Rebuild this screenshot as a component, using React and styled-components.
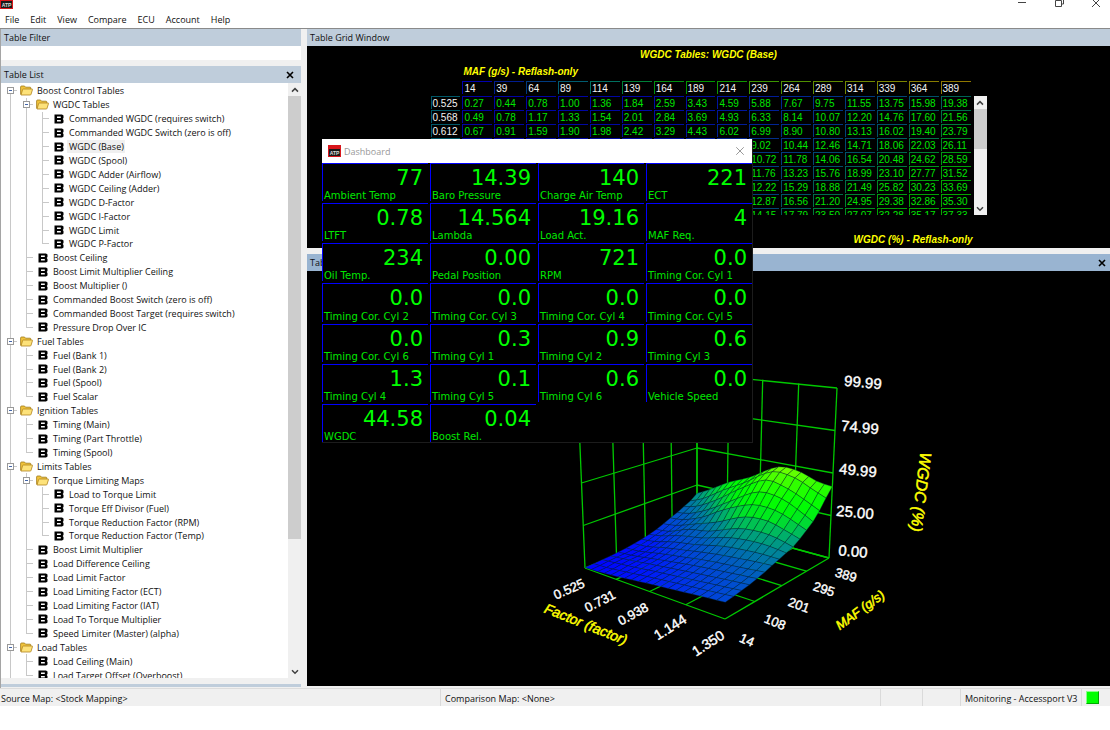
import React from 'react'
import styled, { createGlobalStyle } from 'styled-components'

const GlobalStyle = createGlobalStyle`
  * {
    box-sizing: border-box;
  }
  body {
    margin: 0;
    background: #fff;
    color: #111;
    font-family: 'Open Sans', 'Noto Sans', sans-serif;
    font-size: 9px;
  }
  button, input {
    font: inherit;
    color: inherit;
    border: 0;
    padding: 0;
    margin: 0;
    background: none;
  }
`

const Window = styled.div`
  position: relative;
  display: flex;
  flex-direction: column;
`
const TitleBar = styled.header`
  display: flex;
  justify-content: space-between;
  align-items: flex-start;
  height: 12px;
`
const WindowButtons = styled.div`
  display: flex;
  gap: 27px;
  padding-right: 9px;
  button {
    display: flex;
    width: 10px;
    height: 10px;
  }
`
const Menu = styled.nav`
  display: flex;
  align-items: center;
  gap: 11px;
  height: 17px;
  padding: 0 5px;
  border-bottom: 1px solid #8a8a8a;
  button {
    line-height: 14px;
  }
`
const Body = styled.div`
  display: flex;
  gap: 6px;
  height: 659px;
  background: #f0f0f0;
`
const Side = styled.aside`
  display: flex;
  flex-direction: column;
  width: 301px;
  border-left: 1px solid #a5a5a5;
`
const PaneTitle = styled.div`
  display: flex;
  flex-shrink: 0;
  align-items: center;
  justify-content: space-between;
  height: 17px;
  padding: 0 5px 0 3px;
  background: ${p => p.$active ? '#99b4d1' : '#bfcddb'};
  button {
    display: flex;
    width: 8px;
    height: 8px;
    margin-right: ${p => p.$active ? '-1px' : '2px'};
  }
`
const FilterInput = styled.input`
  flex-shrink: 0;
  width: 100%;
  height: 14px;
  margin-bottom: 6px;
  background: #fff;
  outline: none;
`
const TreeBox = styled.div`
  display: flex;
  flex: 1;
  min-height: 0;
  background: #fff;
`
const TreeClip = styled.div`
  flex: 1;
  overflow: hidden;
`
const Tree = styled.ul`
  display: grid;
  grid-template-rows: repeat(43, minmax(0, 1fr));
  height: calc(100% + 4px);
  margin: 0;
  padding: 1px 0 0 1px;
  list-style: none;
`
const TreeRow = styled.li`
  display: flex;
  align-items: center;
  white-space: nowrap;
`
const line = 'linear-gradient(#c8c8c8, #c8c8c8) no-repeat'
const Guide = styled.span`
  display: flex;
  align-items: center;
  width: 16px;
  align-self: stretch;
  background:
    ${line} 8px ${p => p.$from} / 1px ${p => p.$tall},
    ${line} 8px 50% / ${p => p.$branch ? '7px' : '0'} 1px;
`
const Expander = styled.button`
  && {
    display: flex;
    margin-left: 5px;
    width: 7px;
    height: 7px;
    background: #fff;
  }
`
const TreeIcon = styled.span`
  display: flex;
  justify-content: center;
  width: 17px;
`
const TreeLabel = styled.span`
  padding: 0 1px 0 2px;
  line-height: 13px;
  background: ${p => p.$selected ? '#f0f0f0' : 'none'};
`
const ScrollBar = styled.div`
  display: flex;
  flex-direction: column;
  width: ${p => p.$width};
  background: #f0f0f0;
  button {
    display: flex;
    flex-shrink: 0;
    align-items: center;
    justify-content: center;
    height: 13px;
  }
`
const Thumb = styled.div`
  height: ${p => p.$size};
  background: #cdcdcd;
`
const Track = styled.div`
  flex: 1;
`
const BottomStrip = styled.div`
  flex-shrink: 0;
  height: 3px;
  margin: 6px 0 1px;
  background: #bfcddb;
`
const Main = styled.main`
  display: flex;
  flex: 1;
  flex-direction: column;
  min-width: 0;
`
const GridPane = styled.section`
  display: flex;
  flex-direction: column;
  align-items: center;
  height: 202px;
  margin-bottom: 6px;
  padding-top: 1px;
  background: #000;
`
const Caption = styled.h2`
  margin: 0;
  color: #ff0;
  font: italic bold 10px/16px 'Liberation Sans', sans-serif;
`
const GridBlock = styled.div`
  width: 556px;
`
const AxisCaption = styled(Caption)`
  padding: ${p => p.$end ? '0 14px 0 0' : '0 0 1px 33px'};
  margin-top: ${p => p.$end ? '17px' : '1px'};
  text-align: ${p => p.$end ? 'right' : 'left'};
`
const GridRow = styled.div`
  display: flex;
  height: 134px;
`
const TableClip = styled.div`
  flex: 1;
  overflow: hidden;
`
const GridTable = styled.table`
  width: 542px;
  table-layout: fixed;
  border-spacing: 0;
  font: 10px/13px 'Liberation Sans', sans-serif;
  th, td {
    padding: 0 2px 1px 0;
    text-align: left;
    font-weight: normal;
  }
  thead th {
    padding-bottom: 2px;
  }
`
const Cell = styled.div`
  height: 13px;
  padding-left: 1px;
  border: solid ${p => p.$edge};
  border-width: 1px 0 0 1px;
  color: ${p => p.$head ? '#f4f4f4' : '#00e600'};
`
const GridScroll = styled(ScrollBar)`
  margin: 15px 0 0 1px;
`
const ChartPane = styled.section`
  display: flex;
  height: 415px;
  background: #000;
  svg {
    width: 100%;
    height: 100%;
  }
`
const StatusBar = styled.footer`
  display: flex;
  height: 18px;
  background: #f0f0f0;
  border-top: 1px solid #dcdcdc;
  line-height: 19px;
`
const StatusCell = styled.div`
  flex: ${p => p.$width ? '0 0 ' + p.$width : '1'};
  padding-left: ${p => p.$first ? '1px' : '4px'};
  border-left: ${p => p.$first ? '0' : '1px solid #dadada'};
  white-space: nowrap;
`
const Led = styled.div`
  width: 13px;
  height: 13px;
  margin-top: 2px;
  background: #0f0;
  border: 1px solid;
  border-color: #8f8 #0a0 #0a0 #8f8;
`
const Dashboard = styled.section`
  position: absolute;
  left: 322px;
  top: 139px;
  width: 431px;
  background: #000;
  border: solid #1c1c1c;
  border-width: 0 1px 1px 0;
`
const DashTitle = styled.div`
  display: flex;
  align-items: center;
  gap: 3px;
  height: 24px;
  padding: 0 7px 0 6px;
  background: #fff;
  color: #999;
  font-size: 9px;
  span {
    flex: 1;
  }
  button {
    display: flex;
  }
`
const Gauges = styled.div`
  display: grid;
  grid-template-columns: repeat(4, 1fr);
  grid-template-rows: repeat(7, 1fr);
  gap: 2px;
  height: 279px;
`
const Gauge = styled.div`
  display: flex;
  flex-direction: column;
  justify-content: space-between;
  min-height: 0;
  padding-left: 1px;
  border: solid #00f;
  border-width: 1px 0 0 1px;
  color: #0f0;
  font-family: 'DejaVu Sans', sans-serif;
`
const Reading = styled.output`
  padding-right: 5px;
  font-size: 21px;
  line-height: 28px;
  text-align: right;
`
const GaugeName = styled.label`
  font-size: 10px;
  line-height: 11px;
  margin-top: -3px;
  white-space: nowrap;
  color: #00e800;
`

const tree = [
  [0, 'Boost Control Tables'],
  [1, 'WGDC Tables', true],
  [2, 'Commanded WGDC (requires switch)'],
  [2, 'Commanded WGDC Switch (zero is off)'],
  [2, 'WGDC (Base)'],
  [2, 'WGDC (Spool)'],
  [2, 'WGDC Adder (Airflow)'],
  [2, 'WGDC Ceiling (Adder)'],
  [2, 'WGDC D-Factor'],
  [2, 'WGDC I-Factor'],
  [2, 'WGDC Limit'],
  [2, 'WGDC P-Factor'],
  [1, 'Boost Ceiling'],
  [1, 'Boost Limit Multiplier Ceiling'],
  [1, 'Boost Multiplier ()'],
  [1, 'Commanded Boost Switch (zero is off)'],
  [1, 'Commanded Boost Target (requires switch)'],
  [1, 'Pressure Drop Over IC'],
  [0, 'Fuel Tables'],
  [1, 'Fuel (Bank 1)'],
  [1, 'Fuel (Bank 2)'],
  [1, 'Fuel (Spool)'],
  [1, 'Fuel Scalar'],
  [0, 'Ignition Tables'],
  [1, 'Timing (Main)'],
  [1, 'Timing (Part Throttle)'],
  [1, 'Timing (Spool)'],
  [0, 'Limits Tables'],
  [1, 'Torque Limiting Maps', true],
  [2, 'Load to Torque Limit'],
  [2, 'Torque Eff Divisor (Fuel)'],
  [2, 'Torque Reduction Factor (RPM)'],
  [2, 'Torque Reduction Factor (Temp)'],
  [1, 'Boost Limit Multiplier'],
  [1, 'Load Difference Ceiling'],
  [1, 'Load Limit Factor'],
  [1, 'Load Limiting Factor (ECT)'],
  [1, 'Load Limiting Factor (IAT)'],
  [1, 'Load To Torque Multiplier'],
  [1, 'Speed Limiter (Master) (alpha)'],
  [0, 'Load Tables'],
  [1, 'Load Ceiling (Main)'],
  [1, 'Load Target Offset (Overboost)'],
]

const mafAxis = [14, 39, 64, 89, 114, 139, 164, 189, 214, 239, 264, 289, 314, 339, 364, 389]
const headEdges = [
  '#0000b0', '#001c90', '#003a80', '#005c70', '#007060', '#008038', '#009010', '#009600',
  '#109600', '#3c9600', '#509000', '#608c00', '#708800', '#7c8400', '#887c00', '#907800',
]
const gridRows = [
  ['0.525', '0.27 0.44 0.78 1.00 1.36 1.84 2.59 3.43 4.59 5.88 7.67 9.75 11.55 13.75 15.98 19.38'],
  ['0.568', '0.49 0.78 1.17 1.33 1.54 2.01 2.84 3.69 4.93 6.33 8.14 10.07 12.20 14.76 17.60 21.56'],
  ['0.612', '0.67 0.91 1.59 1.90 1.98 2.42 3.29 4.43 6.02 6.99 8.90 10.80 13.13 16.02 19.40 23.79'],
  ['0.655', '0.92 1.24 1.96 2.31 2.60 3.14 4.20 5.61 7.40 9.02 10.44 12.46 14.71 18.06 22.03 26.11'],
  ['0.699', '1.30 1.71 2.42 2.87 3.26 4.02 5.22 6.73 8.61 10.72 11.78 14.06 16.54 20.48 24.62 28.59'],
  ['0.742', '1.88 2.30 2.97 3.46 3.98 4.90 6.21 7.82 9.70 11.76 13.23 15.76 18.99 23.10 27.77 31.52'],
  ['0.786', '2.41 2.87 3.50 4.02 4.62 5.60 6.95 8.52 10.33 12.22 15.29 18.88 21.49 25.82 30.23 33.69'],
  ['0.829', '2.96 3.42 4.05 4.61 5.30 6.31 7.70 9.24 11.02 12.87 16.56 21.20 24.95 29.38 32.86 35.30'],
  ['0.872', '3.50 4.00 4.60 5.20 6.00 7.00 8.50 10.01 12.00 14.15 17.79 23.50 27.07 32.28 35.17 37.33'],
].map(([head, cells]) => [head, cells.split(' ')])

const gauges = [
  ['Ambient Temp', '77'], ['Baro Pressure', '14.39'], ['Charge Air Temp', '140'], ['ECT', '221'],
  ['LTFT', '0.78'], ['Lambda', '14.564'], ['Load Act.', '19.16'], ['MAF Req.', '4'],
  ['Oil Temp.', '234'], ['Pedal Position', '0.00'], ['RPM', '721'], ['Timing Cor. Cyl 1', '0.0'],
  ['Timing Cor. Cyl 2', '0.0'], ['Timing Cor. Cyl 3', '0.0'], ['Timing Cor. Cyl 4', '0.0'], ['Timing Cor. Cyl 5', '0.0'],
  ['Timing Cor. Cyl 6', '0.0'], ['Timing Cyl 1', '0.3'], ['Timing Cyl 2', '0.9'], ['Timing Cyl 3', '0.6'],
  ['Timing Cyl 4', '1.3'], ['Timing Cyl 5', '0.1'], ['Timing Cyl 6', '0.6'], ['Vehicle Speed', '0.0'],
  ['WGDC', '44.58'], ['Boost Rel.', '0.04'],
]

// value -> colour, blue for low and lime for high
const stops = [
  [0, 0, 0, 255], [4, 0, 25, 250], [8, 0, 65, 220], [13, 0, 100, 185], [18, 0, 140, 145],
  [23, 0, 185, 95], [28, 0, 230, 35], [32, 0, 250, 5], [37, 10, 255, 0], [43, 60, 255, 0], [48, 115, 255, 0], [100, 255, 255, 0],
]
const heat = (v, dim = 1) => {
  const i = Math.max(1, stops.findIndex(s => s[0] >= v))
  const a = stops[i - 1]
  const b = stops[i]
  const t = (v - a[0]) / (b[0] - a[0])
  const c = [1, 2, 3].map(k => Math.round((a[k] + (b[k] - a[k]) * t) * dim))
  return `rgb(${c.join(',')})`
}

// floor corners on the chart: f is the factor axis, m the MAF axis, both 0..1
const P00 = [585, 568]
const P10 = [725, 619]
const P11 = [829, 558]
const P01 = [697, 522]
const rise = { a: [-7, -170], b: [3, -186], c: [8, -170], d: [0, -148] }

const dx1 = P10[0] - P11[0], dx2 = P01[0] - P11[0]
const dy1 = P10[1] - P11[1], dy2 = P01[1] - P11[1]
const sx = P00[0] - P10[0] + P11[0] - P01[0]
const sy = P00[1] - P10[1] + P11[1] - P01[1]
const den = dx1 * dy2 - dx2 * dy1
const g = (sx * dy2 - dx2 * sy) / den
const h = (dx1 * sy - sx * dy1) / den

const project = (f, m, v = 0) => {
  const w = g * f + h * m + 1
  const x = ((P10[0] - P00[0] + g * P10[0]) * f + (P01[0] - P00[0] + h * P01[0]) * m + P00[0]) / w
  const y = ((P10[1] - P00[1] + g * P10[1]) * f + (P01[1] - P00[1] + h * P01[1]) * m + P00[1]) / w
  const up = k => rise.a[k] * (1 - f) * (1 - m) + rise.b[k] * f * (1 - m) + rise.c[k] * f * m + rise.d[k] * (1 - f) * m
  return [x + up(0) * v / 100, y + up(1) * v / 100]
}
const pts = list => list.map(p => p.map(n => n.toFixed(1)).join(',')).join(' ')

const keyRows = [
  [0, gridRows[0][1].map(Number)],
  [2, gridRows[2][1].map(Number)],
  [5, gridRows[5][1].map(Number)],
  [8, gridRows[8][1].map(Number)],
  [12, [5.5, 6, 6.6, 7.4, 8.5, 9.8, 11.5, 14, 17, 20.5, 25.5, 31, 37, 42.5, 46, 47.5]],
  [15, [7, 7.5, 8.2, 9, 10, 11.2, 13, 15.5, 18.5, 22, 26.5, 31, 36, 40, 45, 46.8]],
  [17, [8, 8.5, 9.2, 10, 11, 12.2, 14, 16, 18.4, 21, 24, 28, 32, 36, 41, 43.3]],
  [19, [9, 9.6, 10.3, 11, 12, 13.2, 14.6, 16, 17.3, 18.6, 21, 24, 27, 31.5, 37, 42]],
]
const heightAt = (row, col) => {
  const i = Math.max(1, keyRows.findIndex(k => k[0] >= row))
  const at = k => keyRows[Math.min(Math.max(k, 0), keyRows.length - 1)]
  const [p0, p1, p2, p3] = [at(i - 2), at(i - 1), at(i), at(i + 1)]
  const len = p2[0] - p1[0]
  const t = (row - p1[0]) / len
  const m1 = (p2[1][col] - p0[1][col]) / (p2[0] - p0[0]) * len
  const m2 = (p3[1][col] - p1[1][col]) / (p3[0] - p1[0]) * len
  return (2 * t ** 3 - 3 * t ** 2 + 1) * p1[1][col] + (t ** 3 - 2 * t ** 2 + t) * m1
    + (3 * t ** 2 - 2 * t ** 3) * p2[1][col] + (t ** 3 - t ** 2) * m2
}

const patches = []
for (let col = 14; col >= 0; col--) {
  for (let row = 0; row < 19; row++) {
    const corners = [[row, col], [row + 1, col], [row + 1, col + 1], [row, col + 1]]
    const hs = corners.map(([r, c]) => heightAt(r, c))
    patches.push({
      d: pts(corners.map(([r, c], i) => project(r / 19, c / 15, hs[i]))),
      fill: heat((hs[0] + hs[1] + hs[2] + hs[3]) / 4),
    })
  }
}

const quarters = [0, 0.25, 0.5, 0.75, 1]
const cage = []
quarters.forEach(q => {
  cage.push([project(q, 0), project(q, 1)])
  cage.push([project(0, q), project(1, q)])
  cage.push([project(q, 1), project(q, 1, 100)])
  cage.push([project(0, q), project(0, q, 100)])
  cage.push([project(0, 1, q * 100), project(1, 1, q * 100)])
  cage.push([project(0, 0, q * 100), project(0, 1, q * 100)])
})

const chartLabels = [
  ['99.99', 863, 382, 5, 15], ['74.99', 860, 427, 5, 15], ['49.99', 858, 470, 5, 15],
  ['25.00', 855, 512, 5, 15], ['0.00', 853, 551, 5, 15],
  ['389', 846, 575, 16, 13], ['295', 824, 589, 18, 13], ['201', 799, 605, 20, 13],
  ['108', 775, 622, 22, 13], ['14', 747, 640, 24, 13],
  ['0.525', 569, 589, -24, 13], ['0.731', 600, 601, -27, 13], ['0.938', 633, 614, -29, 13],
  ['1.144', 670, 627, -32, 14], ['1.350', 708, 643, -33, 14],
]
const chartTitles = [
  ['WGDC (%)', 921, 492, 97, 16], ['Factor (factor)', 586, 624, 22, 14], ['MAF (g/s)', 860, 610, -36, 13],
]

const AppIcon = ({ width, height }) => (
  <svg width={width} height={height} viewBox="0 0 13 12" preserveAspectRatio="xMidYMax slice">
    <rect width="13" height="12" fill="#d8161c" />
    <rect x="1" y="4" width="11" height="7" fill="#1a1a1a" />
    <text x="6.5" y="10" textAnchor="middle" fontFamily="Liberation Sans, sans-serif" fontWeight="bold" fontSize="5" fill="#ddd">ATP</text>
  </svg>
)
const CloseIcon = ({ size = 8, color = '#000', weight = 1.6 }) => (
  <svg width={size} height={size} viewBox="0 0 8 8">
    <path d="M1 1l6 6M7 1l-6 6" stroke={color} strokeWidth={weight} />
  </svg>
)
const Chevron = ({ down }) => (
  <svg width="8" height="6" viewBox="0 0 8 6">
    <path d={down ? 'M1 1.2l3 3 3-3' : 'M1 4.6l3-3 3 3'} fill="none" stroke="#404040" strokeWidth="1.5" />
  </svg>
)
const Folder = () => (
  <svg width="13" height="11" viewBox="0 0 13 11">
    <path d="M.6 9.5V2q0-1 1-1H4.500l1 1.200H10q.8 0 .8.8v1.500" fill="#f0c33c" stroke="#a07a18" strokeWidth=".8" />
    <path d="M1 10L2.600 4.600q.2-.6.8-.6H12q.7 0 .5.600L11 9.400q-.2.600-.8.600z" fill="#fde27a" stroke="#b08420" strokeWidth=".8" />
  </svg>
)
const TableIcon = () => (
  <svg width="10" height="10" viewBox="0 0 10 10">
    <path d="M.5.5h7.500l1.500 1v2.500l-.8 1 .8 1v2.500L8 9.500H.5z" fill="#000" />
    <path d="M3 2.500h3.800v1.500H3zM3 6h3.800v1.500H3z" fill="#fff" />
  </svg>
)

function Scroll({ as: Bar = ScrollBar, width, thumb }) {
  return (
    <Bar $width={width}>
      <button aria-label="Scroll up"><Chevron /></button>
      <Thumb $size={thumb} />
      <Track />
      <button aria-label="Scroll down"><Chevron down /></button>
    </Bar>
  )
}

// does a later row continue the line at this level before the branch closes
const continues = (index, level) => {
  for (let i = index + 1; i < tree.length; i++) {
    if (tree[i][0] < level) return false
    if (tree[i][0] === level) return true
  }
  return level === 0
}

function TreeItem({ index }) {
  const [level, label, branch] = tree[index]
  const folder = level === 0 || branch
  const guides = []
  for (let l = 0; l <= level; l++) {
    const own = l === level
    const more = continues(index, l)
    const from = index === 0 ? '100%' : '0'
    guides.push(
      <Guide key={l} $from={from} $tall={more ? (index === 0 ? '50%' : '100%') : own ? '50%' : '0'} $branch={own}>
        {own && folder && (
          <Expander aria-label={'Collapse ' + label}>
            <svg width="7" height="7" viewBox="0 0 7 7">
              <rect x=".5" y=".5" width="6" height="6" fill="#fff" stroke="#999" />
              <path d="M2 3.500h3" stroke="#4466aa" />
            </svg>
          </Expander>
        )}
      </Guide>
    )
  }
  return (
    <TreeRow>
      {guides}
      <TreeIcon>{folder ? <Folder /> : <TableIcon />}</TreeIcon>
      <TreeLabel $selected={label === 'WGDC (Base)'}>{label}</TreeLabel>
    </TreeRow>
  )
}

function TableGrid() {
  return (
    <GridPane>
      <Caption>WGDC Tables: WGDC (Base)</Caption>
      <GridBlock>
        <AxisCaption>MAF (g/s) - Reflash-only</AxisCaption>
        <GridRow>
          <TableClip>
            <GridTable>
              <thead>
                <tr>
                  <th />
                  {mafAxis.map((m, i) => (
                    <th key={m} scope="col"><Cell $head $edge={headEdges[i]}>{m}</Cell></th>
                  ))}
                </tr>
              </thead>
              <tbody>
                {gridRows.map(([head, cells]) => (
                  <tr key={head}>
                    <th scope="row"><Cell $head $edge="#005868">{head}</Cell></th>
                    {cells.map((v, i) => (
                      <td key={i}><Cell $edge={heat(Number(v), 0.65)}>{v}</Cell></td>
                    ))}
                  </tr>
                ))}
              </tbody>
            </GridTable>
          </TableClip>
          <Scroll as={GridScroll} width="13px" thumb="40px" />
        </GridRow>
        <AxisCaption $end>WGDC (%) - Reflash-only</AxisCaption>
      </GridBlock>
    </GridPane>
  )
}

function Surface() {
  return (
    <ChartPane>
      <svg viewBox="307 271 803 415">
        {cage.map((c, i) => (
          <polyline key={i} points={pts(c)} stroke="#00c800" strokeWidth="1.3" fill="none" />
        ))}
        {patches.map((p, i) => (
          <polygon key={i} points={p.d} fill={p.fill} stroke="#002830" strokeOpacity=".6" strokeWidth=".6" strokeLinejoin="round" />
        ))}
        <g fontFamily="Liberation Sans, sans-serif" textAnchor="middle" dominantBaseline="central">
          {chartLabels.map(([t, x, y, turn, size]) => (
            <text key={t} transform={`translate(${x} ${y}) rotate(${turn})`} fontSize={size} fill="#fff" stroke="#fff" strokeWidth=".4">{t}</text>
          ))}
          {chartTitles.map(([t, x, y, turn, size]) => (
            <text key={t} transform={`translate(${x} ${y}) rotate(${turn})`} fontSize={size} fontStyle="italic" fill="#ff0" stroke="#ff0" strokeWidth=".5">{t}</text>
          ))}
        </g>
      </svg>
    </ChartPane>
  )
}

function App() {
  return (
    <>
      <GlobalStyle />
      <Window>
        <TitleBar>
          <AppIcon width={13} height={9} />
          <WindowButtons>
            <button aria-label="Minimize">
              <svg width="10" height="10"><path d="M1 2.500h8" stroke="#444" /></svg>
            </button>
            <button aria-label="Restore">
              <svg width="10" height="10"><path d="M3.500 0v-2h6v6h-2M1.500.5h6v6h-6z" fill="none" stroke="#444" /></svg>
            </button>
            <button aria-label="Close">
              <svg width="10" height="10"><path d="M1-1l8 8M9-1l-8 8" stroke="#444" /></svg>
            </button>
          </WindowButtons>
        </TitleBar>
        <Menu>
          {['File', 'Edit', 'View', 'Compare', 'ECU', 'Account', 'Help'].map(m => <button key={m}>{m}</button>)}
        </Menu>
        <Body>
          <Side>
            <PaneTitle as="label" htmlFor="filter">Table Filter</PaneTitle>
            <FilterInput id="filter" type="text" />
            <PaneTitle>
              Table List
              <button aria-label="Close table list"><CloseIcon /></button>
            </PaneTitle>
            <TreeBox>
              <TreeClip>
                <Tree>
                  {tree.map((t, i) => <TreeItem key={i} index={i} />)}
                </Tree>
              </TreeClip>
              <Scroll width="13px" thumb="443px" />
            </TreeBox>
            <BottomStrip />
          </Side>
          <Main>
            <PaneTitle>Table Grid Window</PaneTitle>
            <TableGrid />
            <PaneTitle $active>
              Table Graph Window
              <button aria-label="Close graph"><CloseIcon /></button>
            </PaneTitle>
            <Surface />
          </Main>
        </Body>
        <StatusBar>
          <StatusCell $first $width="440px">Source Map: &lt;Stock Mapping&gt;</StatusCell>
          <StatusCell>Comparison Map: &lt;None&gt;</StatusCell>
          <StatusCell $width="42px" />
          <StatusCell $width="38px" />
          <StatusCell $width="121px">Monitoring - Accessport V3</StatusCell>
          <StatusCell $width="29px"><Led /></StatusCell>
        </StatusBar>
        <Dashboard>
          <DashTitle>
            <AppIcon width={13} height={12} />
            <span>Dashboard</span>
            <button aria-label="Close dashboard"><CloseIcon size={10} color="#999" weight={0.8} /></button>
          </DashTitle>
          <Gauges>
            {gauges.map(([name, value]) => (
              <Gauge key={name}>
                <Reading id={name.replace(/\W/g, '')}>{value}</Reading>
                <GaugeName htmlFor={name.replace(/\W/g, '')}>{name}</GaugeName>
              </Gauge>
            ))}
          </Gauges>
        </Dashboard>
      </Window>
    </>
  )
}

export default App
